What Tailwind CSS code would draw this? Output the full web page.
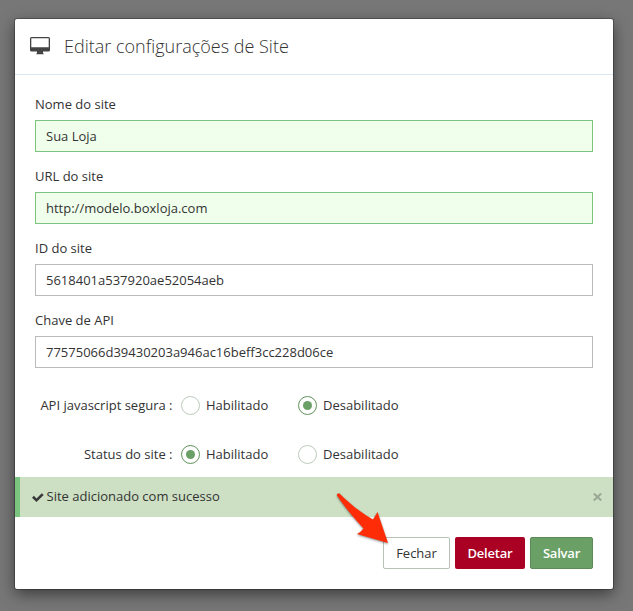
<!DOCTYPE html>
<html lang="pt-BR">
<head>
<meta charset="utf-8">
<title>Editar configurações de Site</title>
<script src="https://cdn.jsdelivr.net/npm/@tailwindcss/browser@4"></script>
</head>
<body class="w-[633px] h-[611px] overflow-hidden bg-[#777777] pt-[19px] pl-[15px] font-['Open_Sans','Noto_Sans',sans-serif] text-[13px] leading-5 text-[#333333]">
<main class="relative flex flex-col w-[598px] h-[570px] bg-white rounded-[2px] shadow-[0_0_0_1px_rgba(0,0,0,0.25),0_5px_15px_rgba(0,0,0,0.5)]">
  <header class="flex items-center h-14 pl-[15px] pb-[2px] border-b border-[#dbe6ef]">
    <svg class="w-5 h-[18px]" viewBox="0 0 20 18" fill="#444"><path fill-rule="evenodd" d="M1.500 0h17A1.500 1.500 0 0 1 20 1.500v11.500a1.500 1.500 0 0 1-1.500 1.500H13V16h.5v1.200h-7V16H7v-1.500H1.500A1.500 1.500 0 0 1 0 13v-11.500A1.500 1.500 0 0 1 1.500 0zM1.300 1.300v9h17.400v-9z"/></svg>
    <h1 class="ml-[14px] text-[18px] font-light leading-6 whitespace-nowrap">Editar configurações de Site</h1>
  </header>
  <form class="flex flex-col px-5 pt-[13px]">
    <label class="flex flex-col mb-2"><span class="h-8 leading-8">Nome do site</span><input class="h-8 px-[10px] border border-[#7bc47f] bg-[#f0ffec]" value="Sua Loja"></label>
    <label class="flex flex-col mb-2"><span class="h-8 leading-8">URL do site</span><input class="h-8 px-[10px] border border-[#7bc47f] bg-[#f0ffec]" value="http://modelo.boxloja.com"></label>
    <label class="flex flex-col mb-2"><span class="h-8 leading-8">ID do site</span><input class="h-8 px-[10px] border border-[#bbbbbb] bg-white" value="5618401a537920ae52054aeb"></label>
    <label class="flex flex-col"><span class="h-8 leading-8">Chave de API</span><input class="h-8 px-[10px] border border-[#bbbbbb] bg-white" value="77575066d39430203a946ac16beff3cc228d06ce"></label>
    <div class="flex items-center h-[19px] mt-7">
      <span class="w-[137.5px] pb-[2px] text-right whitespace-nowrap">API javascript segura :</span>
      <span class="size-[19px] ml-[8.5px] rounded-full border border-[#bccabd]"></span>
      <span class="w-[92px] ml-[6px] pb-[2px]">Habilitado</span>
      <span class="flex items-center justify-center size-[19px] rounded-full border border-[#60935c]"><i class="size-[9px] rounded-full bg-[#6a9f66]"></i></span>
      <span class="ml-[6px] pb-[2px]">Desabilitado</span>
    </div>
    <div class="flex items-center h-[19px] mt-[30px]">
      <span class="w-[137.5px] pb-[2px] text-right whitespace-nowrap">Status do site :</span>
      <span class="flex items-center justify-center size-[19px] ml-[8.5px] rounded-full border border-[#60935c]"><i class="size-[9px] rounded-full bg-[#6a9f66]"></i></span>
      <span class="w-[92px] ml-[6px] pb-[2px]">Habilitado</span>
      <span class="size-[19px] rounded-full border border-[#bccabd]"></span>
      <span class="ml-[6px] pb-[2px]">Desabilitado</span>
    </div>
  </form>
  <div class="flex items-center h-10 mt-[13px] pl-3 pr-[11px] border-l-[5px] border-[#7bc47f] bg-[#cde0c4]">
    <svg class="w-3 h-[9px] mr-[3px]" viewBox="0 0 12 9" fill="#393939"><path d="M0 4.700 1.900 2.800 4.500 5.400 9.800.200 11.700 2.100 4.500 9z"/></svg>
    <span class="-ml-[0.5px] pb-[2px]">Site adicionado com sucesso</span>
    <svg class="w-[9px] h-[8px] ml-auto" viewBox="0 0 9 8" fill="none" stroke="#9ba795" stroke-width="2"><path d="M.8.500 8.200 7.500M8.200.500.800 7.500"/></svg>
  </div>
  <footer class="flex justify-end gap-[5px] px-5 pt-5">
    <button type="button" class="w-[67px] h-8 rounded-[2px] border border-[#b8c3b5] bg-white">Fechar</button>
    <button type="button" class="w-[70px] h-8 rounded-[2px] bg-[#a90024] font-semibold tracking-[-0.2px] text-white">Deletar</button>
    <button type="button" class="w-[63px] h-8 rounded-[2px] border border-[#5d8a59] bg-[#6a9f66] font-semibold tracking-[-0.2px] text-white">Salvar</button>
  </footer>
  <svg class="absolute left-[319px] top-[472px] w-[60px] h-[58px] drop-shadow-[0_1px_1px_rgba(0,0,0,0.45)]" viewBox="334 491 60 58" fill="#ff2c08"><path d="M337 495.500Q336.500 493 339.500 493.500C347 501 358 511 373 519.500L377.500 512 388 543 357 534Q361 532 363.500 528.500C353 517 343 505 337 495.500Z"/></svg>
</main>
</body>
</html>
